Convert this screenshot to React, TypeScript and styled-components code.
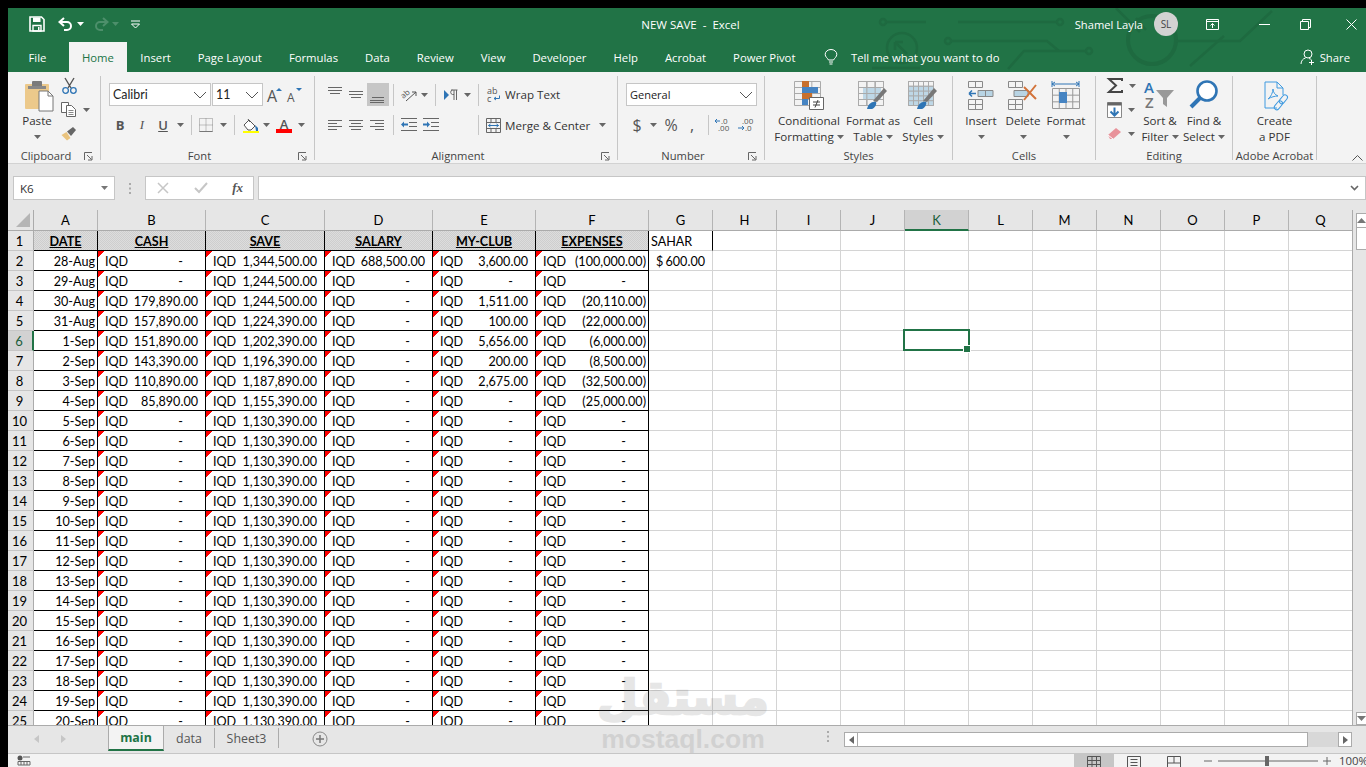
import React from "react";
import styled, { createGlobalStyle } from "styled-components";

const Global = createGlobalStyle`
  html, body { margin: 0; padding: 0; background: #000; overflow: hidden; }
  #root { width: 1366px; height: 767px; overflow: hidden; }
  * { box-sizing: border-box; }
`;

const UI = `"Open Sans", "Noto Sans", sans-serif`;
const SHEET = `Lato, "Liberation Sans", sans-serif`;
const GREEN = "#217346";

const Frame = styled.div`
  position: relative;
  width: 1366px;
  height: 767px;
  padding: 8px 0 0 8px;
  background: #000;
  overflow: hidden;
  display: flex;
  flex-direction: column;
  font-family: ${UI};
`;

/* ---------- header ---------- */
const Header = styled.header`
  position: relative;
  height: 64px;
  background: ${GREEN};
  color: #fff;
  flex: none;
`;
const Circuit = styled.svg`
  position: absolute;
  inset: 0;
  pointer-events: none;
`;
const TitleBar = styled.div`
  position: relative;
  height: 34px;
  padding-bottom: 2px;
  display: grid;
  grid-template-columns: 1fr auto 1fr;
  align-items: center;
`;
const Qat = styled.div`
  display: flex;
  align-items: center;
  padding-left: 21px;
`;
const QatItem = styled.span<{ $w: number; $ml?: number }>`
  width: ${(p) => p.$w}px;
  margin-left: ${(p) => p.$ml ?? 0}px;
  display: flex;
  justify-content: center;
  align-items: center;
`;
const DocTitle = styled.div`
  font-size: 11.5px;
  padding-left: 7px;
  white-space: pre;
`;
const WinSide = styled.div`
  display: flex;
  align-items: center;
  justify-content: flex-end;
`;
const UserName = styled.span`
  font-size: 11.2px;
  margin-right: 11px;
`;
const Avatar = styled.span`
  width: 24px;
  height: 24px;
  border-radius: 50%;
  background: #d2d2d2;
  color: #444;
  font-size: 10px;
  display: flex;
  align-items: center;
  justify-content: center;
  margin-right: 2px;
`;
const WinBtn = styled.span<{ $w: number; $pl?: number }>`
  width: ${(p) => p.$w}px;
  padding-left: ${(p) => p.$pl ?? 0}px;
  display: flex;
  justify-content: center;
`;
const TabsBar = styled.nav`
  position: relative;
  height: 30px;
  display: flex;
  align-items: stretch;
  padding-left: 7px;
  font-size: 11.3px;
`;
const Tab = styled.span<{ $active?: boolean; $mr?: number; $px?: number }>`
  display: flex;
  align-items: center;
  padding: 0 ${(p) => p.$px ?? 13.5}px;
  margin-right: ${(p) => p.$mr ?? 0}px;
  white-space: nowrap;
  background: ${(p) => (p.$active ? "#f3f3f3" : "transparent")};
  color: ${(p) => (p.$active ? GREEN : "#fff")};
`;
const TellMe = styled.span`
  display: flex;
  align-items: center;
  gap: 13px;
  margin-left: 15px;
`;
const Share = styled.span`
  margin-left: auto;
  display: flex;
  align-items: center;
  gap: 5px;
  padding-right: 16px;
`;

/* ---------- ribbon ---------- */
const Ribbon = styled.section`
  position: relative;
  height: 92px;
  flex: none;
  background: #f3f3f3;
  border-bottom: 1px solid #d2d2d2;
  padding-top: 4px;
  display: flex;
  font-size: 11.6px;
  color: #333;
`;
const Group = styled.div<{ $w: number }>`
  width: ${(p) => p.$w}px;
  height: 84px;
  flex: none;
  border-right: 1px solid #c6c6c6;
  display: flex;
  flex-direction: column;
`;
const GroupBody = styled.div<{ $pl?: number; $row?: boolean; $justify?: string }>`
  flex: 1;
  min-height: 0;
  padding-left: ${(p) => p.$pl ?? 8}px;
  display: flex;
  flex-direction: ${(p) => (p.$row ? "row" : "column")};
  justify-content: ${(p) => p.$justify ?? "flex-start"};
`;
const GroupFoot = styled.div`
  height: 12px;
  display: flex;
  line-height: 16px;
  font-size: 11.2px;
  color: #444;
  text-align: center;
  white-space: nowrap;
`;
const FootLabel = styled.span`
  flex: 1;
`;
const Launcher = styled.span`
  width: 16px;
  height: 16px;
  flex: none;
  display: flex;
  align-items: center;
`;
const StackRows = styled.div`
  padding-top: 7px;
  display: flex;
  flex-direction: column;
  gap: 9px;
`;
const ToolRow = styled.div<{ $h: number }>`
  height: ${(p) => p.$h}px;
  display: flex;
  align-items: center;
`;
const Combo = styled.div<{ $w: number; $sheet?: boolean }>`
  width: ${(p) => p.$w}px;
  height: 23px;
  margin-right: 1px;
  flex: none;
  background: #fff;
  border: 1px solid #c6c6c6;
  display: flex;
  align-items: center;
  justify-content: space-between;
  padding: 0 3px;
  font-family: ${(p) => (p.$sheet ? SHEET : UI)};
  font-size: ${(p) => (p.$sheet ? 12.4 : 11)}px;
  color: #222;
`;
const Tool = styled.span<{ $w: number; $on?: boolean }>`
  width: ${(p) => p.$w}px;
  height: ${(p) => (p.$on ? 23 : 20)}px;
  flex: none;
  display: flex;
  align-items: center;
  justify-content: center;
  background: ${(p) => (p.$on ? "#c6c6c6" : "transparent")};
`;
const Sep = styled.span<{ $l: number; $r: number; $h?: number }>`
  width: 1px;
  height: ${(p) => p.$h ?? 20}px;
  flex: none;
  background: #c6c6c6;
  margin: 0 ${(p) => p.$r}px 0 ${(p) => p.$l}px;
`;
const TextTool = styled.span<{ $gap: number }>`
  display: flex;
  align-items: center;
  gap: ${(p) => p.$gap}px;
  white-space: nowrap;
`;
const BigBtn = styled.div<{ $w: number }>`
  width: ${(p) => p.$w}px;
  flex: none;
  display: flex;
  flex-direction: column;
  align-items: center;
  padding-top: 4px;
  text-align: center;
  line-height: 16px;
  white-space: nowrap;
`;
const BigIcon = styled.span<{ $shift?: number }>`
  height: 33px;
  margin-left: ${(p) => p.$shift ?? 0}px;
  display: flex;
  align-items: flex-start;
  justify-content: center;
`;
const Line = styled.span`
  height: 16px;
  display: flex;
  align-items: center;
  justify-content: center;
  gap: 3px;
`;
const SmallCol = styled.div<{ $w: number }>`
  width: ${(p) => p.$w}px;
  flex: none;
  padding-top: 1px;
  display: flex;
  flex-direction: column;
  gap: 7px;
`;
const SmallItem = styled.div<{ $pl: number }>`
  height: 17px;
  padding-left: ${(p) => p.$pl}px;
  display: flex;
  align-items: center;
  gap: 6px;
`;
const Collapse = styled.span`
  position: absolute;
  right: 3px;
  bottom: 2px;
  display: flex;
`;
const ToolGlyph = styled.span<{ $kind: "b" | "i" | "u" }>`
  color: #555;
  font-size: 13px;
  font-family: ${(p) => (p.$kind === "i" ? `"Liberation Serif", serif` : UI)};
  font-weight: ${(p) => (p.$kind === "b" ? 700 : p.$kind === "u" ? 600 : 400)};
  font-style: ${(p) => (p.$kind === "i" ? "italic" : "normal")};
  text-decoration: ${(p) => (p.$kind === "u" ? "underline" : "none")};
`;
const FxGlyph = styled.span`
  font-family: "Liberation Serif", serif;
  font-style: italic;
  font-weight: 700;
  font-size: 13px;
  color: #555;
`;

/* ---------- formula bar ---------- */
const FormulaBar = styled.div`
  height: 46px;
  flex: none;
  background: #e6e6e6;
  display: flex;
  align-items: flex-start;
  padding: 12px 0 0 5px;
`;
const FieldBox = styled.div<{ $w?: number }>`
  height: 24px;
  width: ${(p) => (p.$w ? `${p.$w}px` : "auto")};
  flex: ${(p) => (p.$w ? "none" : 1)};
  background: #fff;
  border: 1px solid #c6c6c6;
  display: flex;
  align-items: center;
  justify-content: space-between;
  padding: 0 6px;
  font-size: 11.6px;
  color: #333;
`;
const Grip = styled.span`
  width: 30px;
  height: 24px;
  display: flex;
  align-items: center;
  justify-content: center;
  flex: none;
`;
const FxBox = styled(FieldBox)`
  margin-right: 4px;
  padding: 0 10px 0 11px;
`;

/* ---------- sheet ---------- */
const SheetArea = styled.div`
  height: 515px;
  flex: none;
  display: flex;
  background: #e6e6e6;
`;
const Grid = styled.div`
  width: 1345px;
  height: 515px;
  flex: none;
  overflow: hidden;
  display: grid;
  grid-template-columns: 26px 64px 108px 119px 108px 103px 113px repeat(11, 64px);
  grid-template-rows: 21px;
  grid-auto-rows: 20px;
  border-right: 1px solid #ababab;
  font-family: ${SHEET};
  font-size: 12.6px;
  color: #000;
  background: #fff;
`;
const Corner = styled.div`
  background: #e6e6e6;
  border-right: 1px solid #ababab;
  border-bottom: 1px solid #ababab;
  display: flex;
  align-items: flex-end;
  justify-content: flex-end;
  padding: 0 3px 3px 0;
`;
const ColHead = styled.div<{ $sel?: boolean }>`
  display: flex;
  align-items: center;
  justify-content: center;
  font-size: 13px;
  background: ${(p) => (p.$sel ? "#d2d2d2" : "#e6e6e6")};
  color: ${(p) => (p.$sel ? "#1b5e3a" : "#000")};
  border-right: 1px solid #b4b4b4;
  border-bottom: ${(p) => (p.$sel ? `2px solid ${GREEN}` : "1px solid #ababab")};
`;
const RowHead = styled.div<{ $sel?: boolean }>`
  display: flex;
  align-items: center;
  justify-content: center;
  padding: 1px 2px 0 0;
  font-size: 13px;
  background: ${(p) => (p.$sel ? "#d2d2d2" : "#e6e6e6")};
  color: ${(p) => (p.$sel ? "#1b5e3a" : "#000")};
  border-right: ${(p) => (p.$sel ? `2px solid ${GREEN}` : "1px solid #ababab")};
  border-bottom: 1px solid #c6c6c6;
`;
const Cell = styled.div<{ $black?: boolean; $rightBlack?: boolean }>`
  position: relative;
  padding-top: 1px;
  border-right: 1px solid ${(p) => (p.$black || p.$rightBlack ? "#000" : "#d4d4d4")};
  border-bottom: 1px solid ${(p) => (p.$black ? "#000" : "#d4d4d4")};
  display: flex;
  align-items: center;
  white-space: nowrap;
  overflow: hidden;
`;
const TitleCell = styled(Cell)`
  justify-content: center;
  font-weight: 700;
  text-decoration: underline;
  background: repeating-conic-gradient(#cecece 0 25%, #dddddd 0 50%) 0 0 / 2px 2px;
`;
const TextCell = styled(Cell)`
  padding-left: 2px;
`;
const DateCell = styled(Cell)`
  justify-content: flex-end;
  padding-right: 2px;
`;
const MoneyCell = styled(Cell)<{ $note?: boolean }>`
  justify-content: space-between;
  padding-left: 7px;
  background-image: ${(p) =>
    p.$note ? "linear-gradient(135deg, #f00 4.6px, transparent 4.6px)" : "none"};
`;
const Amount = styled.span<{ $kind: "num" | "neg" | "dash" }>`
  padding-right: ${(p) => (p.$kind === "num" ? 7 : p.$kind === "neg" ? 2 : 22)}px;
`;
const ActiveCell = styled(Cell)`
  overflow: visible;
  &::after {
    content: "";
    position: absolute;
    inset: -2px -2px -1px -2px;
    border: 2px solid ${GREEN};
    z-index: 2;
  }
  &::before {
    content: "";
    position: absolute;
    right: -3px;
    bottom: -3px;
    width: 6px;
    height: 6px;
    background: ${GREEN};
    border: 1px solid #fff;
    z-index: 3;
  }
`;
const VScroll = styled.aside`
  flex: 1;
  margin-top: 3px;
  padding-left: 3px;
  display: flex;
  flex-direction: column;
`;
const ScrollBtn = styled.div<{ $h?: number; $w?: number }>`
  height: ${(p) => (p.$h ? `${p.$h}px` : "auto")};
  width: ${(p) => (p.$w ? `${p.$w}px` : "auto")};
  flex: none;
  background: #fff;
  border: 1px solid #ababab;
  display: flex;
  align-items: center;
  justify-content: center;
`;
const VThumb = styled.div`
  height: 22px;
  flex: none;
  background: #fff;
  border: 1px solid #ababab;
  border-top: 0;
`;
const Filler = styled.div`
  flex: 1;
`;

/* ---------- sheet tabs ---------- */
const TabStrip = styled.div`
  height: 28px;
  flex: none;
  background: #e6e6e6;
  border-top: 1px solid #ababab;
  display: flex;
  align-items: flex-start;
  font-size: 12.4px;
  color: #555;
`;
const Nav = styled.div`
  width: 100px;
  height: 26px;
  flex: none;
  display: flex;
  align-items: center;
  gap: 22px;
  padding-left: 26px;
`;
const SheetTab = styled.div<{ $active?: boolean; $w: number }>`
  width: ${(p) => p.$w}px;
  height: ${(p) => (p.$active ? 25 : 20)}px;
  margin-top: ${(p) => (p.$active ? 0 : 2)}px;
  flex: none;
  display: flex;
  align-items: center;
  justify-content: center;
  background: ${(p) => (p.$active ? "#f3f3f3" : "transparent")};
  color: ${(p) => (p.$active ? GREEN : "#555")};
  font-weight: ${(p) => (p.$active ? 700 : 400)};
  border-left: ${(p) => (p.$active ? "1px solid #ababab" : "0")};
  border-right: 1px solid #ababab;
  border-bottom: ${(p) => (p.$active ? `2px solid ${GREEN}` : "0")};
`;
const AddSheet = styled.span`
  margin: 5px 0 0 33px;
  display: flex;
`;
const HDots = styled.span`
  margin: 5px 0 0 auto;
  width: 16px;
  display: flex;
  justify-content: center;
`;
const HScroll = styled.div`
  width: 508px;
  height: 15px;
  margin: 6px 14px 0 8px;
  flex: none;
  display: flex;
  background: #d8d8d8;
`;
const HThumb = styled.div`
  width: 450px;
  flex: none;
  background: #fff;
  border-top: 1px solid #ababab;
  border-bottom: 1px solid #ababab;
  border-right: 1px solid #ababab;
`;

/* ---------- status ---------- */
const Status = styled.footer`
  height: 14px;
  flex: 1;
  background: #f3f3f3;
  border-top: 1px solid #c6c6c6;
  display: flex;
  align-items: flex-start;
  font-size: 11.4px;
  color: #444;
  overflow: hidden;
`;
const StatusLeft = styled.span`
  margin-left: 9px;
  padding-top: 1px;
  display: flex;
`;
const StatusRight = styled.div`
  margin-left: auto;
  display: flex;
  align-items: flex-start;
`;
const ViewBtn = styled.span<{ $on?: boolean }>`
  width: 40px;
  height: 14px;
  display: flex;
  justify-content: center;
  padding-top: 2px;
  background: ${(p) => (p.$on ? "#c6c6c6" : "transparent")};
`;
const Zoom = styled.span`
  margin: 2px 0 0 5px;
  width: 140px;
  display: flex;
`;
const ZoomText = styled.span`
  width: 27px;
  line-height: 14px;
  white-space: nowrap;
`;

/* ---------- watermark ---------- */
const Watermark = styled.div`
  position: absolute;
  left: 596px;
  top: 669px;
  width: 174px;
  display: flex;
  flex-direction: column;
  align-items: center;
  color: #6e6e6e;
  opacity: 0.17;
  pointer-events: none;
  z-index: 4;
`;
const WmArabic = styled.span`
  font-family: "DejaVu Sans", sans-serif;
  font-weight: 700;
  font-size: 47px;
  line-height: 57px;
  direction: rtl;
  -webkit-text-stroke: 2.5px #6e6e6e;
`;
const WmLatin = styled.span`
  font-family: "Liberation Sans", sans-serif;
  font-weight: 700;
  font-size: 26.5px;
  line-height: 26px;
`;

/* ---------- icons ---------- */
type SP = { w: number; h: number; children: React.ReactNode };
const IconSvg = styled.svg`
  flex: none;
  display: block;
  overflow: visible;
`;
const S = ({ w, h, children }: SP) => (
  <IconSvg width={w} height={h} viewBox={`0 0 ${w} ${h}`} fill="none">
    {children}
  </IconSvg>
);
const Caret = ({ c = "#666" }: { c?: string }) => (
  <S w={7} h={4}>
    <path d="M0 0h7L3.500 4z" fill={c} />
  </S>
);
const Chevron = () => (
  <S w={14} h={8}>
    <path d="M1 1l6 6 6-6" stroke="#555" />
  </S>
);
const DialogIcon = () => (
  <S w={9} h={9}>
    <path d="M.5 8V.5H8M3 3l4.500 4.500M4 8h4V4" stroke="#666" />
  </S>
);
const Lines = ({ rows, w = 16, h = 16 }: { rows: number[][]; w?: number; h?: number }) => (
  <S w={w} h={h}>
    {rows.map(([a, b, y], i) => (
      <path key={i} d={`M${a} ${y}H${b}`} stroke="#666" />
    ))}
  </S>
);
const SaveIcon = () => (
  <S w={16} h={16}>
    <path d="M1 1h11.500L15 3.500V15H1z" stroke="#fff" strokeWidth="1.600" />
    <path d="M4 1.500h7.500V6H4z" fill="#fff" />
    <path d="M4 9.500h8V15H4z" stroke="#fff" strokeWidth="1.400" />
    <path d="M9 11h1.500v3H9z" fill="#fff" />
  </S>
);
const UndoIcon = ({ c }: { c: string }) => (
  <S w={16} h={14}>
    <path d="M6 1L1.500 5 6 9" stroke={c} strokeWidth="2" />
    <path d="M2 5h7a4 4 0 0 1 0 8H6" stroke={c} strokeWidth="2" />
  </S>
);
const RedoIcon = ({ c }: { c: string }) => (
  <S w={16} h={14}>
    <path d="M10 1l4.500 4L10 9" stroke={c} strokeWidth="2" />
    <path d="M14 5H7a4 4 0 0 0 0 8h3" stroke={c} strokeWidth="2" />
  </S>
);
const Customize = () => (
  <S w={9} h={9}>
    <path d="M0 1h9" stroke="#fff" />
    <path d="M.5 4h8L4.500 8z" stroke="#fff" />
  </S>
);
const BulbIcon = () => (
  <S w={14} h={16}>
    <path d="M4.500 11C3.500 9 1.200 8 1.200 5.300a5.800 4.800 0 0 1 11.600 0C12.800 8 10.500 9 9.500 11z" stroke="#fff" />
    <path d="M5 13h4M5.500 15h3" stroke="#fff" />
  </S>
);
const ShareIcon = () => (
  <S w={15} h={16}>
    <circle cx="8" cy="5" r="4" stroke="#fff" />
    <path d="M1 15c0-3 2-5.500 4.500-6M9 9.500c1 .2 2 .7 2.600 1.500M11.500 11v5M9 13.500h5" stroke="#fff" />
  </S>
);
const PasteIcon = () => (
  <S w={30} h={32}>
    <rect x="1" y="4" width="24" height="25" rx="1" fill="#ecc98b" />
    <rect x="8" y="1" width="10" height="6" rx="1" fill="#7b7b7b" />
    <path d="M4 6h18v3H4z" fill="#888" />
    <path d="M15 11h9l5 5v15H15z" fill="#fff" stroke="#777" />
    <path d="M24 11v5h5" stroke="#777" />
  </S>
);
const Scissors = () => (
  <S w={15} h={16}>
    <path d="M3 0l6 10M12 0L6 10" stroke="#555" strokeWidth="1.400" />
    <circle cx="3.600" cy="12.500" r="2.800" stroke="#2f75b5" strokeWidth="1.300" />
    <circle cx="11.400" cy="12.500" r="2.800" stroke="#2f75b5" strokeWidth="1.300" />
  </S>
);
const CopyIcon = () => (
  <S w={16} h={15}>
    <path d="M.5.500h7v10h-7z" fill="#fff" stroke="#666" />
    <path d="M5.500 3.500h5l4 4v7h-9z" fill="#fff" stroke="#666" />
    <path d="M7.500 8.500h5M7.500 10.500h5M7.500 12.500h5" stroke="#888" />
  </S>
);
const Brush = () => (
  <S w={16} h={15}>
    <path d="M.5 9l5-3 4 6-3.500 2.500z" fill="#e9c37e" />
    <path d="M6 5.500l6-4.500 3 3-5 6z" fill="#666" />
  </S>
);
const GrowA = ({ s, up }: { s: number; up: boolean }) => (
  <S w={16} h={16}>
    <text x="1" y="15" fontFamily="Open Sans" fontSize={s} fill="#555">
      A
    </text>
    <path d={up ? "M10 4l3-3 3 3z" : "M10 1h6l-3 3z"} fill="#2f75b5" />
  </S>
);
const BorderIcon = () => (
  <S w={14} h={14}>
    <path d="M.5.500h13v13H.5zM7 .5v13M.5 7h13" stroke="#8a8a8a" strokeDasharray="1 1" />
    <path d="M.5 13.500h13" stroke="#777" />
  </S>
);
const FillIcon = () => (
  <S w={17} h={15}>
    <path d="M2 7l5-5 6 6-4 4H6z" fill="#fff" stroke="#555" />
    <path d="M6 1l2 3" stroke="#555" />
    <path d="M13 7l3 3v3h-2z" fill="#2f75b5" />
    <path d="M1 13h16v2H1z" fill="#ff0" />
  </S>
);
const ColorIcon = () => (
  <S w={16} h={15}>
    <text x="8" y="11" textAnchor="middle" fontFamily="Open Sans" fontWeight="600" fontSize="13" fill="#555">
      A
    </text>
    <path d="M0 11h16v4H0z" fill="#f00" />
  </S>
);
const OrientIcon = () => (
  <S w={16} h={15}>
    <text x="0" y="10" fontFamily="Open Sans" fontSize="8" fill="#555" transform="rotate(-40 4 8)">
      ab
    </text>
    <path d="M5 14L15 5M15 5h-4M15 5v4" stroke="#555" />
  </S>
);
const DirIcon = () => (
  <S w={14} h={12}>
    <path d="M0 1l5 5-5 5z" fill="#2f75b5" />
    <path d="M10 1v10M12.500 1v10M7 1h6.500M10 5.500H8.500a2.300 2.300 0 0 1 0-4.500" stroke="#666" />
  </S>
);
const WrapIcon = () => (
  <S w={14} h={16}>
    <text x="0" y="7" fontFamily="Open Sans" fontSize="9" fill="#555">
      ab
    </text>
    <text x="0" y="15" fontFamily="Open Sans" fontSize="9" fill="#555">
      c
    </text>
    <path d="M12.500 8.500v3H7M9 10l-2 1.500L9 13" stroke="#2f75b5" />
  </S>
);
const MergeIcon = () => (
  <S w={15} h={15}>
    <path d="M.5.500h14v14H.5zM.5 4.500h14M.5 10.500h14M5 .5v4M10 .5v4M5 10.500v4M10 10.500v4" stroke="#666" />
    <path d="M2.500 7.500h10M2.500 7.500l2-1.500M2.500 7.500l2 1.500M12.500 7.500l-2-1.500M12.500 7.500l-2 1.500" stroke="#2f75b5" />
  </S>
);
const IndentIcon = ({ out }: { out: boolean }) => (
  <S w={16} h={14}>
    <path d="M0 .5h16M8 4.500h8M8 8.500h8M0 12.500h16" stroke="#666" />
    <path d={out ? "M0 6.500l3-3v2h4v2H3v2z" : "M7 6.500l-3-3v2H0v2h4v2z"} fill="#2f75b5" />
  </S>
);
const CommaText = styled.span<{ $s: number }>`
  font-size: ${(p) => p.$s}px;
  color: #555;
  line-height: 1;
`;
const DecIcon = ({ inc }: { inc: boolean }) => (
  <S w={18} h={14}>
    <text x={inc ? 7 : 5} y="6" fontFamily="Open Sans" fontSize="8" fill="#555">
      {inc ? ".0" : ".00"}
    </text>
    <text x={inc ? 4 : 8} y="13" fontFamily="Open Sans" fontSize="8" fill="#555">
      {inc ? ".00" : ".0"}
    </text>
    <path d={inc ? "M6 3H1M1 3l2-2M1 3l2 2" : "M1 10h6M7 10L5 8M7 10l-2 2"} stroke="#2f75b5" />
  </S>
);
const GridPart = ({ x, y, w, h, cols, rows, c = "#888" }: { x: number; y: number; w: number; h: number; cols: number; rows: number; c?: string }) => {
  const d: string[] = [`M${x + 0.5} ${y + 0.5}h${w}v${h}h${-w}z`];
  for (let i = 1; i < cols; i++) d.push(`M${x + 0.5 + (w * i) / cols} ${y}v${h}`);
  for (let i = 1; i < rows; i++) d.push(`M${x} ${y + 0.5 + (h * i) / rows}h${w}`);
  return <path d={d.join("")} stroke={c} />;
};
const CondIcon = () => (
  <S w={32} h={32}>
    <GridPart x={1} y={1} w={26} h={24} cols={3} rows={4} c="#aaa" />
    <path d="M9 1h7v6H9z" fill="#c8702d" />
    <path d="M9 7h16v6H9z" fill="#4684c2" />
    <path d="M9 13h10v6H9z" fill="#c8702d" />
    <path d="M9 19h6v6H9z" fill="#4684c2" />
    <path d="M16.500 17.500h14v12h-14z" fill="#fff" stroke="#666" />
    <path d="M20 22h7M20 25h7M25 20l-3 7.500" stroke="#444" />
  </S>
);
const TableIcon = ({ dense }: { dense: boolean }) => (
  <S w={32} h={32}>
    <GridPart x={1} y={1} w={25} h={24} cols={dense ? 5 : 3} rows={dense ? 5 : 4} c="#999" />
    <path d={dense ? "M1 6h25v19H1z" : "M6 7h18v12H6z"} fill="#b8d4e4" opacity=".9" />
    <GridPart x={1} y={1} w={25} h={24} cols={dense ? 5 : 3} rows={dense ? 5 : 4} c="#aaa" />
    <path d="M16 21l11-13 3 3-10 11z" fill="#777" />
    <path d="M10 29c1-5 5-8 9-7 1 2-1 6-4 7z" fill="#2f75b5" />
  </S>
);
const InsertIcon = () => (
  <S w={28} h={30}>
    <GridPart x={1} y={1} w={14} h={6} cols={2} rows={1} />
    <GridPart x={1} y={19} w={14} h={10} cols={2} rows={2} />
    <path d="M11 10.500h15v6H11z" fill="#b8d4e4" stroke="#888" />
    <path d="M18.500 10.500v6" stroke="#888" />
    <path d="M9 13.500H2M2 13.500l3-3M2 13.500l3 3" stroke="#2f75b5" strokeWidth="1.500" />
  </S>
);
const DeleteIcon = () => (
  <S w={32} h={30}>
    <GridPart x={1} y={1} w={14} h={6} cols={2} rows={1} />
    <GridPart x={1} y={19} w={14} h={10} cols={2} rows={2} />
    <path d="M7 10.500h14v6H7z" fill="#b8d4e4" stroke="#888" />
    <path d="M17 7l12 12M29 5L17 20" stroke="#d2733a" strokeWidth="2" />
  </S>
);
const FormatIcon = () => (
  <S w={30} h={32}>
    <path d="M1 1v6M28 1v6M1 4h27M1 4l3-2M1 4l3 2M28 4l-3-2M28 4l-3 2" stroke="#2f75b5" />
    <GridPart x={1} y={8} w={27} h={20} cols={4} rows={3} c="#999" />
    <path d="M8 12h8v11H8z" fill="#4684c2" />
  </S>
);
const SigmaIcon = () => (
  <S w={16} h={15}>
    <path d="M15 3V1H2l7 6.500L2 14h13v-2" stroke="#444" strokeWidth="2" />
  </S>
);
const FillDown = () => (
  <S w={15} h={16}>
    <path d="M.5.500h14v15H.5z" fill="#fff" stroke="#888" />
    <path d="M.5.500h14v3H.5z" fill="#666" />
    <path d="M7.500 5.500v8M3.500 9.500l4 4 4-4" stroke="#2f75b5" strokeWidth="2" />
  </S>
);
const Eraser = () => (
  <S w={15} h={13}>
    <path d="M1 8l8-7 5 4-8 7H3z" fill="#e8929a" />
    <path d="M1 8l5 4" stroke="#fff" />
  </S>
);
const SortIcon = () => (
  <S w={32} h={32}>
    <text x="0" y="13" fontFamily="Open Sans" fontWeight="600" fontSize="15" fill="#2f75b5">
      A
    </text>
    <text x="1" y="28" fontFamily="Open Sans" fontWeight="600" fontSize="15" fill="#777">
      Z
    </text>
    <path d="M12 10h18l-7 8v9l-4-3v-6z" fill="#999" />
  </S>
);
const FindIcon = () => (
  <S w={30} h={32}>
    <circle cx="18" cy="11" r="9.500" stroke="#2f75b5" strokeWidth="2.600" fill="#fff" />
    <path d="M11 18L2 27" stroke="#2f75b5" strokeWidth="4" />
  </S>
);
const PdfIcon = () => (
  <S w={30} h={32}>
    <path d="M17 28H5V2h12l6 6v7" stroke="#3f9ae0" />
    <path d="M17 2v6h6" stroke="#3f9ae0" />
    <path d="M8 19c3-2 5-7 5-10 0 3 2 6 5 7-3 0-7 1-10 3z" stroke="#3f9ae0" />
    <rect x="21" y="14" width="5" height="10" rx="2.500" transform="rotate(40 23 19)" stroke="#3f9ae0" />
    <rect x="16" y="20" width="5" height="10" rx="2.500" transform="rotate(40 18 25)" stroke="#3f9ae0" />
  </S>
);

const top = [[0, 14, 0.5], [0, 14, 3.5], [2, 12, 6.5]];
const ALIGN_ROW2 = {
  left: [[0, 14, 3.5], [0, 9, 6.5], [0, 14, 9.5], [0, 9, 12.5]],
  center: [[0, 14, 3.5], [2, 12, 6.5], [0, 14, 9.5], [2, 12, 12.5]],
  right: [[0, 14, 3.5], [5, 14, 6.5], [0, 14, 9.5], [5, 14, 12.5]],
};

const CircuitArt = () => (
  <Circuit width="1358" height="64" viewBox="8 8 1358 64" fill="none">
    <g stroke="#1e6a40" strokeWidth="2.500">
      <circle cx="883" cy="22" r="3" />
      <path d="M886 22h40" />
      <circle cx="902" cy="48" r="15" />
      <path d="M895 42h8M895 42v8M895 42l12 12" />
      <path d="M872 68h48" />
      <circle cx="948" cy="41" r="3" />
      <path d="M951 41h96l12 10" />
      <circle cx="1060" cy="22" r="3" />
      <path d="M958 22h99" />
      <circle cx="1089" cy="51" r="3" />
      <path d="M1086 51h-62l-16 18" />
      <circle cx="1152" cy="40" r="24" strokeWidth="4" />
      <path d="M1146 30l-10-12M1116 8l24 24" />
      <path d="M1176 41h64l32-30" />
      <path d="M1190 66l34-30" />
    </g>
  </Circuit>
);

/* ---------- data ---------- */
type Row = [string, string, string, string, string, string];
const DASH = "-";
const LEAD: Row[] = [
  ["28-Aug", DASH, "1,344,500.00", "688,500.00", "3,600.00", "(100,000.00)"],
  ["29-Aug", DASH, "1,244,500.00", DASH, DASH, DASH],
  ["30-Aug", "179,890.00", "1,244,500.00", DASH, "1,511.00", "(20,110.00)"],
  ["31-Aug", "157,890.00", "1,224,390.00", DASH, "100.00", "(22,000.00)"],
  ["1-Sep", "151,890.00", "1,202,390.00", DASH, "5,656.00", "(6,000.00)"],
  ["2-Sep", "143,390.00", "1,196,390.00", DASH, "200.00", "(8,500.00)"],
  ["3-Sep", "110,890.00", "1,187,890.00", DASH, "2,675.00", "(32,500.00)"],
  ["4-Sep", "85,890.00", "1,155,390.00", DASH, DASH, "(25,000.00)"],
];
const ROWS: Row[] = [
  ...LEAD,
  ...Array.from({ length: 16 }, (_, i): Row => [`${i + 5}-Sep`, DASH, "1,130,390.00", DASH, DASH, DASH]),
];
const TITLES = ["DATE", "CASH", "SAVE", "SALARY", "MY-CLUB", "EXPENSES"];
const COLS = "ABCDEFGHIJKLMNOPQ".split("");
const EMPTY = COLS.slice(7);

const kindOf = (v: string): "num" | "neg" | "dash" =>
  v === DASH ? "dash" : v.startsWith("(") ? "neg" : "num";

const Money = ({ v }: { v: string }) => (
  <MoneyCell $black $note>
    <span>IQD</span>
    <Amount $kind={kindOf(v)}>{v}</Amount>
  </MoneyCell>
);

const Sheet = () => (
  <Grid>
    <Corner>
      <S w={14} h={14}>
        <path d="M14 0v14H0z" fill="#b5b5b5" />
      </S>
    </Corner>
    {COLS.map((c) => (
      <ColHead key={c} $sel={c === "K"}>
        {c}
      </ColHead>
    ))}
    <RowHead>1</RowHead>
    {TITLES.map((t) => (
      <TitleCell key={t} $black>
        {t}
      </TitleCell>
    ))}
    <TextCell $rightBlack>SAHAR</TextCell>
    {EMPTY.map((c) => (
      <Cell key={c} />
    ))}
    {ROWS.map((r, i) => {
      const n = i + 2;
      return (
        <React.Fragment key={n}>
          <RowHead $sel={n === 6}>{n}</RowHead>
          <DateCell $black>{r[0]}</DateCell>
          {r.slice(1).map((v, j) => (
            <Money key={j} v={v} />
          ))}
          {n === 2 ? (
            <MoneyCell>
              <span>$</span>
              <Amount $kind="num">600.00</Amount>
            </MoneyCell>
          ) : (
            <Cell />
          )}
          {EMPTY.map((c) => (n === 6 && c === "K" ? <ActiveCell key={c} /> : <Cell key={c} />))}
        </React.Fragment>
      );
    })}
  </Grid>
);

const Foot = ({ label, launcher }: { label: string; launcher?: boolean }) => (
  <GroupFoot>
    <FootLabel>{label}</FootLabel>
    {launcher && (
      <Launcher>
        <DialogIcon />
      </Launcher>
    )}
  </GroupFoot>
);

export default function App() {
  return (
    <Frame>
      <Global />
      <Header>
        <CircuitArt />
        <TitleBar>
          <Qat>
            <QatItem $w={16}><SaveIcon /></QatItem>
            <QatItem $w={16} $ml={13}><UndoIcon c="#fff" /></QatItem>
            <QatItem $w={12}><Caret c="#fff" /></QatItem>
            <QatItem $w={16} $ml={7}><RedoIcon c="#4d8f6b" /></QatItem>
            <QatItem $w={12}><Caret c="#4d8f6b" /></QatItem>
            <QatItem $w={28}><Customize /></QatItem>
          </Qat>
          <DocTitle>NEW SAVE  -  Excel</DocTitle>
          <WinSide>
            <UserName>Shamel Layla</UserName>
            <Avatar>SL</Avatar>
            <WinBtn $w={64}>
              <S w={13} h={11}>
                <path d="M.5.500h12v10H.5zM.5 2.500h12M6.500 9V4.500M4.500 6.500l2-2 2 2" stroke="#fff" />
              </S>
            </WinBtn>
            <WinBtn $w={40}>
              <S w={11} h={11}>
                <path d="M0 5.500h11" stroke="#fff" />
              </S>
            </WinBtn>
            <WinBtn $w={42}>
              <S w={11} h={11}>
                <path d="M.5 2.500h8v8h-8zM2.500 2.500v-2h8v8h-2" stroke="#fff" />
              </S>
            </WinBtn>
            <WinBtn $w={40} $pl={10}>
              <S w={11} h={11}>
                <path d="M.5.500l10 10M10.500.500l-10 10" stroke="#fff" />
              </S>
            </WinBtn>
          </WinSide>
        </TitleBar>
        <TabsBar>
          <Tab $mr={9}>File</Tab>
          <Tab $active $px={13}>Home</Tab>
          <Tab>Insert</Tab>
          <Tab>Page Layout</Tab>
          <Tab>Formulas</Tab>
          <Tab>Data</Tab>
          <Tab>Review</Tab>
          <Tab>View</Tab>
          <Tab>Developer</Tab>
          <Tab>Help</Tab>
          <Tab>Acrobat</Tab>
          <Tab>Power Pivot</Tab>
          <TellMe>
            <BulbIcon />
            <span>Tell me what you want to do</span>
          </TellMe>
          <Share>
            <ShareIcon />
            <span>Share</span>
          </Share>
        </TabsBar>
      </Header>

      <Ribbon>
        <Group $w={93}>
          <GroupBody $row>
            <BigBtn $w={42}>
              <BigIcon $shift={4}><PasteIcon /></BigIcon>
              <Line>Paste</Line>
              <Line><Caret /></Line>
            </BigBtn>
            <SmallCol $w={34}>
              <SmallItem $pl={4}><Scissors /></SmallItem>
              <SmallItem $pl={3}><CopyIcon /><Caret /></SmallItem>
              <SmallItem $pl={3}><Brush /></SmallItem>
            </SmallCol>
          </GroupBody>
          <Foot label="Clipboard" launcher />
        </Group>

        <Group $w={214}>
          <GroupBody>
            <StackRows>
              <ToolRow $h={23}>
                <Combo $w={102} $sheet>Calibri<Chevron /></Combo>
                <Combo $w={51} $sheet>11<Chevron /></Combo>
                <Tool $w={20}><GrowA s={16} up /></Tool>
                <Tool $w={20}><GrowA s={12} up={false} /></Tool>
              </ToolRow>
              <ToolRow $h={20}>
                <Tool $w={22}><ToolGlyph $kind="b">B</ToolGlyph></Tool>
                <Tool $w={22}><ToolGlyph $kind="i">I</ToolGlyph></Tool>
                <Tool $w={20}><ToolGlyph $kind="u">U</ToolGlyph></Tool>
                <Tool $w={14}><Caret /></Tool>
                <Sep $l={4} $r={4} />
                <Tool $w={20}><BorderIcon /></Tool>
                <Tool $w={14}><Caret /></Tool>
                <Sep $l={4} $r={4} />
                <Tool $w={22}><FillIcon /></Tool>
                <Tool $w={10}><Caret /></Tool>
                <Tool $w={26}><ColorIcon /></Tool>
                <Tool $w={8}><Caret /></Tool>
              </ToolRow>
            </StackRows>
          </GroupBody>
          <Foot label="Font" launcher />
        </Group>

        <Group $w={303}>
          <GroupBody $pl={10}>
            <StackRows>
              <ToolRow $h={23}>
                <Tool $w={21}><Lines rows={top} /></Tool>
                <Tool $w={21}><Lines rows={[[0, 14, 4.5], [0, 14, 7.5], [2, 12, 10.5]]} /></Tool>
                <Tool $w={22} $on><Lines rows={[[2, 14, 10.5], [0, 14, 13.5], [0, 14, 15.5]]} /></Tool>
                <Sep $l={4} $r={4} $h={22} />
                <Tool $w={22}><OrientIcon /></Tool>
                <Tool $w={8}><Caret /></Tool>
                <Sep $l={7} $r={5} $h={22} />
                <Tool $w={20}><DirIcon /></Tool>
                <Tool $w={12}><Caret /></Tool>
                <Sep $l={5} $r={8} $h={22} />
                <TextTool $gap={4}><WrapIcon /><span>Wrap Text</span></TextTool>
              </ToolRow>
              <ToolRow $h={20}>
                <Tool $w={21}><Lines rows={ALIGN_ROW2.left} /></Tool>
                <Tool $w={21}><Lines rows={ALIGN_ROW2.center} /></Tool>
                <Tool $w={22}><Lines rows={ALIGN_ROW2.right} /></Tool>
                <Sep $l={4} $r={4} />
                <Tool $w={22}><IndentIcon out /></Tool>
                <Tool $w={22}><IndentIcon out={false} /></Tool>
                <Sep $l={36} $r={7} />
                <TextTool $gap={4}><MergeIcon /><span>Merge &amp; Center</span></TextTool>
                <Tool $w={24}><Caret /></Tool>
              </ToolRow>
            </StackRows>
          </GroupBody>
          <Foot label="Alignment" launcher />
        </Group>

        <Group $w={147}>
          <GroupBody>
            <StackRows>
              <ToolRow $h={23}>
                <Combo $w={131}>General<Chevron /></Combo>
              </ToolRow>
              <ToolRow $h={20}>
                <Tool $w={22}><CommaText $s={16}>$</CommaText></Tool>
                <Tool $w={10}><Caret /></Tool>
                <Tool $w={26}><CommaText $s={16}>%</CommaText></Tool>
                <Tool $w={16}><CommaText $s={16}>,</CommaText></Tool>
                <Sep $l={8} $r={0} />
                <Tool $w={28}><DecIcon inc /></Tool>
                <Tool $w={17}><DecIcon inc={false} /></Tool>
              </ToolRow>
            </StackRows>
          </GroupBody>
          <Foot label="Number" launcher />
        </Group>

        <Group $w={188}>
          <GroupBody $row>
            <BigBtn $w={72}>
              <BigIcon><CondIcon /></BigIcon>
              <Line>Conditional</Line>
              <Line>Formatting <Caret /></Line>
            </BigBtn>
            <BigBtn $w={56}>
              <BigIcon><TableIcon dense={false} /></BigIcon>
              <Line>Format as</Line>
              <Line>Table <Caret /></Line>
            </BigBtn>
            <BigBtn $w={44}>
              <BigIcon><TableIcon dense /></BigIcon>
              <Line>Cell</Line>
              <Line>Styles <Caret /></Line>
            </BigBtn>
          </GroupBody>
          <Foot label="Styles" />
        </Group>

        <Group $w={143}>
          <GroupBody $row>
            <BigBtn $w={40}>
              <BigIcon><InsertIcon /></BigIcon>
              <Line>Insert</Line>
              <Line><Caret /></Line>
            </BigBtn>
            <BigBtn $w={44}>
              <BigIcon><DeleteIcon /></BigIcon>
              <Line>Delete</Line>
              <Line><Caret /></Line>
            </BigBtn>
            <BigBtn $w={42}>
              <BigIcon><FormatIcon /></BigIcon>
              <Line>Format</Line>
              <Line><Caret /></Line>
            </BigBtn>
          </GroupBody>
          <Foot label="Cells" />
        </Group>

        <Group $w={137}>
          <GroupBody $row>
            <SmallCol $w={34}>
              <SmallItem $pl={3}><SigmaIcon /><Caret /></SmallItem>
              <SmallItem $pl={3}><FillDown /><Caret /></SmallItem>
              <SmallItem $pl={3}><Eraser /><Caret /></SmallItem>
            </SmallCol>
            <BigBtn $w={44}>
              <BigIcon><SortIcon /></BigIcon>
              <Line>Sort &amp;</Line>
              <Line>Filter <Caret /></Line>
            </BigBtn>
            <BigBtn $w={44}>
              <BigIcon><FindIcon /></BigIcon>
              <Line>Find &amp;</Line>
              <Line>Select <Caret /></Line>
            </BigBtn>
          </GroupBody>
          <Foot label="Editing" />
        </Group>

        <Group $w={84}>
          <GroupBody $row $pl={0} $justify="center">
            <BigBtn $w={80}>
              <BigIcon><PdfIcon /></BigIcon>
              <Line>Create</Line>
              <Line>a PDF</Line>
            </BigBtn>
          </GroupBody>
          <Foot label="Adobe Acrobat" />
        </Group>

        <Collapse>
          <S w={11} h={6}>
            <path d="M.5 5.500l5-5 5 5" stroke="#555" />
          </S>
        </Collapse>
      </Ribbon>

      <FormulaBar>
        <FieldBox $w={102}>
          K6
          <Caret c="#777" />
        </FieldBox>
        <Grip>
          <S w={3} h={11}>
            <path d="M0 0h2v2H0zM0 4.500h2v2H0zM0 9h2v2H0z" fill="#aaa" />
          </S>
        </Grip>
        <FxBox $w={109}>
          <S w={12} h={12}>
            <path d="M1 1l10 10M11 1L1 11" stroke="#c6c6c6" strokeWidth="1.500" />
          </S>
          <S w={14} h={12}>
            <path d="M1 6l4 4 8-9" stroke="#c6c6c6" strokeWidth="2" />
          </S>
          <FxGlyph>fx</FxGlyph>
        </FxBox>
        <FieldBox>
          <span />
          <S w={9} h={6}>
            <path d="M1 1l3.500 3.500L8 1" stroke="#666" strokeWidth="1.600" />
          </S>
        </FieldBox>
      </FormulaBar>

      <SheetArea>
        <Sheet />
        <VScroll>
          <ScrollBtn $h={15}>
            <S w={9} h={5}><path d="M0 5l4.500-5L9 5z" fill="#777" /></S>
          </ScrollBtn>
          <VThumb />
          <Filler />
          <ScrollBtn $h={13}>
            <S w={9} h={5}><path d="M0 0l4.500 5L9 0z" fill="#777" /></S>
          </ScrollBtn>
        </VScroll>
      </SheetArea>

      <TabStrip>
        <Nav>
          <S w={5} h={8}><path d="M5 0v8L0 4z" fill="#c6c6c6" /></S>
          <S w={5} h={8}><path d="M0 0v8l5-4z" fill="#c6c6c6" /></S>
        </Nav>
        <SheetTab $active $w={56}>main</SheetTab>
        <SheetTab $w={51}>data</SheetTab>
        <SheetTab $w={64}>Sheet3</SheetTab>
        <AddSheet>
          <S w={16} h={16}>
            <circle cx="8" cy="8" r="7" stroke="#888" />
            <path d="M8 4v8M4 8h8" stroke="#777" strokeWidth="1.500" />
          </S>
        </AddSheet>
        <HDots>
          <S w={3} h={11}>
            <path d="M0 0h2v2H0zM0 4.500h2v2H0zM0 9h2v2H0z" fill="#aaa" />
          </S>
        </HDots>
        <HScroll>
          <ScrollBtn $w={14}><S w={5} h={8}><path d="M5 0v8L0 4z" fill="#666" /></S></ScrollBtn>
          <HThumb />
          <Filler />
          <ScrollBtn $w={14}><S w={5} h={8}><path d="M0 0v8l5-4z" fill="#666" /></S></ScrollBtn>
        </HScroll>
      </TabStrip>

      <Status>
        <StatusLeft>
          <S w={13} h={10}>
            <circle cx="3" cy="3" r="2.500" fill="#555" />
            <path d="M6 2h7M1 6.500h12v3.500H1zM4 6.500v3.500M7 6.500v3.500M10 6.500v3.500" stroke="#666" />
          </S>
        </StatusLeft>
        <StatusRight>
          <ViewBtn $on>
            <S w={14} h={12}><path d="M.5.500h13v12H.5zM5 .5v12M9.500.5v12M.5 4.500h13M.5 8.500h13" stroke="#555" /></S>
          </ViewBtn>
          <ViewBtn>
            <S w={14} h={12}><path d="M.5.500h13v12H.5zM3.500 3.500h7M3.500 6.500h7M3.500 9.500h7" stroke="#555" /></S>
          </ViewBtn>
          <ViewBtn>
            <S w={14} h={12}><path d="M.5 12V.5h13V12M7 .5V7M.5 7h13" stroke="#555" /></S>
          </ViewBtn>
          <Zoom>
            <S w={136} h={10}>
              <path d="M5 5h8M19 5h100M124 5h8M128 1v8" stroke="#666" />
              <path d="M66 0h4v10h-4z" fill="#666" />
            </S>
          </Zoom>
          <ZoomText>100%</ZoomText>
        </StatusRight>
      </Status>

      <Watermark>
        <WmArabic>مستقل</WmArabic>
        <WmLatin>mostaql.com</WmLatin>
      </Watermark>
    </Frame>
  );
}
